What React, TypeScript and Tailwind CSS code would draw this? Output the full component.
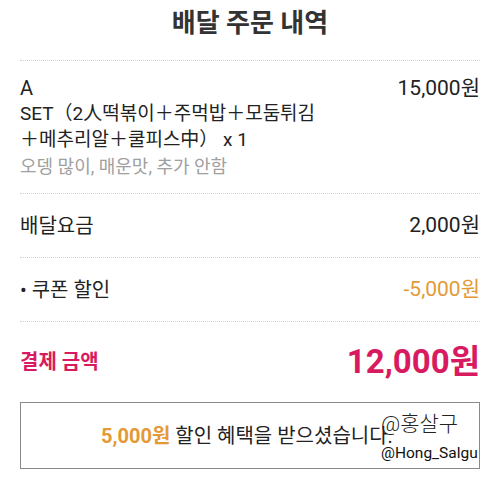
import React from 'react';

const font = "font-['Roboto','Noto_Sans_CJK_KR',sans-serif]";

const Row = ({ label, value, valueClass }: { label: React.ReactNode; value: string; valueClass: string }) => (
    <div className="flex items-center justify-between h-16 border-b border-dotted border-[#d4d4d4]">
        <span className="text-[20px] text-[#222]">{label}</span>
        <span className={`text-[21px] ${valueClass}`}>{value}</span>
    </div>
);

export default function App() {
    return (
        <div className={`relative w-[500px] h-[477px] bg-white px-5 ${font}`}>
            {/* 제목 */}
            <div className="h-[61px] flex items-center justify-center border-b border-dotted border-[#d4d4d4]">
                <h1 className="text-[26px] font-bold text-[#333] -mt-[13px]">배달 주문 내역</h1>
            </div>

            {/* 메뉴 */}
            <div className="flex justify-between pt-[14px] pb-[13px] border-b border-dotted border-[#d4d4d4]">
                <div className="text-[19px] leading-[26px] text-[#222]">
                    <div className="text-[20px]">A</div>
                    <div>SET（2人떡볶이＋주먹밥＋모둠튀김</div>
                    <div>＋메추리알＋쿨피스中） x 1</div>
                    <div className="text-[18px] text-[#a0a0a0] leading-[27px]">오뎅 많이, 매운맛, 추가 안함</div>
                </div>
                <div className="text-[21px] leading-[26px] text-[#222]">15,000원</div>
            </div>

            <Row label="배달요금" value="2,000원" valueClass="text-[#222]" />
            <Row label="• 쿠폰 할인" value="-5,000원" valueClass="text-[#e39a35]" />

            {/* 결제 금액 */}
            <div className="flex items-center justify-between h-[80px]">
                <span className="text-[20px] font-bold text-[#d81b60]">결제 금액</span>
                <span className="text-[33px] font-bold text-[#d81b60]">12,000원</span>
            </div>

            {/* 할인 안내 */}
            <div className="h-[67px] border-[1.5px] border-[#8a8a8a] flex items-center justify-center">
                <span className="text-[20px] text-[#222] pr-[6px]">
                    <span className="font-bold text-[#e39a35]">5,000원</span> 할인 혜택을 받으셨습니다.
                </span>
            </div>

            {/* 워터마크 */}
            <div className="absolute left-[381px] top-[414px] text-[21px] leading-none text-[#222] font-light">@홍살구</div>
            <div className="absolute left-[381px] top-[446px] text-[15.5px] leading-none text-[#111]">@Hong_Salgu</div>
        </div>
    );
}
